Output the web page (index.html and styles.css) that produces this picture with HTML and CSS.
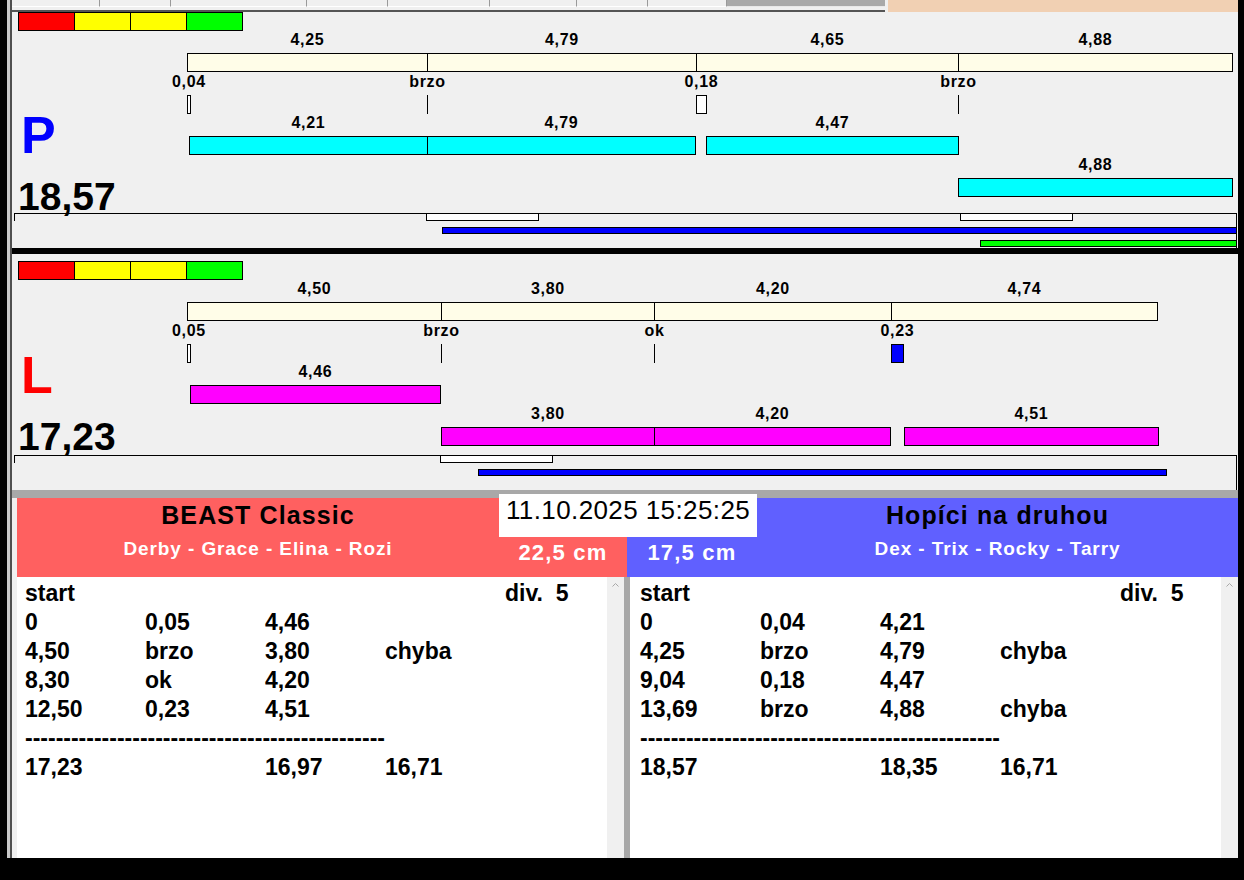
FILE: index.html
```html
<!DOCTYPE html>
<html lang="cs">
<head>
    <meta charset="UTF-8">
    <meta name="viewport" content="width=device-width, initial-scale=1.0">
    <link rel="stylesheet" href="styles.css">
    <title>agility časomíra</title>
</head>
<body>
<div class="app">
  <div class="shell">
    <div class="screen">

      <!-- tab strip, mostly scrolled out of view -->
      <div class="topbar">
        <div class="tabs">
          <div class="tab"></div>
          <div class="tab"></div>
          <div class="tab"></div>
          <div class="tab"></div>
          <div class="tab"></div>
          <div class="tab"></div>
          <div class="tab"></div>
          <div class="tab"></div>
          <div class="tab-rest"></div>
        </div>
        <div class="peach"></div>
      </div>

      <!-- right lane -->
      <section class="lane lane-p">
        <div class="lane-head">
          <div class="rating"><span class="r"></span><span class="y"></span><span class="y"></span><span class="g"></span></div>
          <div class="letter">P</div>
          <div class="total">18,57</div>
        </div>
        <div class="track">
          <i class="tick"></i>
          <i class="gap" style="left:412px"></i>
          <i class="gap" style="left:946px"></i>
          <i class="bar-blue" style="left:428px;width:795px"></i>
          <i class="bar-green" style="left:966px;width:257px"></i>
        </div>
        <div class="chart">
          <div class="seg plan" style="left:175px;width:241px"><span>4,25</span></div>
          <div class="seg plan" style="left:415px;width:270px"><span>4,79</span></div>
          <div class="seg plan" style="left:684px;width:263px"><span>4,65</span></div>
          <div class="seg plan" style="left:946px;width:275px"><span>4,88</span></div>

          <div class="mark" style="left:175px;width:4px"><span>0,04</span></div>
          <div class="mark line" style="left:415px"><span>brzo</span></div>
          <div class="mark" style="left:684px;width:11px"><span>0,18</span></div>
          <div class="mark line" style="left:946px"><span>brzo</span></div>

          <div class="seg run" style="left:177px;width:239px"><span>4,21</span></div>
          <div class="seg run" style="left:415px;width:269px"><span>4,79</span></div>
          <div class="seg run" style="left:694px;width:253px"><span>4,47</span></div>
          <div class="seg run second" style="left:946px;width:275px"><span>4,88</span></div>
        </div>
      </section>

      <div class="divider"></div>

      <!-- left lane -->
      <section class="lane lane-l">
        <div class="lane-head">
          <div class="rating"><span class="r"></span><span class="y"></span><span class="y"></span><span class="g"></span></div>
          <div class="letter">L</div>
          <div class="total">17,23</div>
        </div>
        <div class="track">
          <i class="tick"></i>
          <i class="gap" style="left:426px"></i>
          <i class="bar-blue" style="left:464px;width:689px"></i>
        </div>
        <div class="chart">
          <div class="seg plan" style="left:175px;width:255px"><span>4,50</span></div>
          <div class="seg plan" style="left:429px;width:214px"><span>3,80</span></div>
          <div class="seg plan" style="left:642px;width:238px"><span>4,20</span></div>
          <div class="seg plan" style="left:879px;width:267px"><span>4,74</span></div>

          <div class="mark" style="left:175px;width:4px"><span>0,05</span></div>
          <div class="mark line" style="left:429px"><span>brzo</span></div>
          <div class="mark line" style="left:642px"><span>ok</span></div>
          <div class="mark late" style="left:879px;width:13px"><span>0,23</span></div>

          <div class="seg run" style="left:178px;width:251px"><span>4,46</span></div>
          <div class="seg run second" style="left:429px;width:214px"><span>3,80</span></div>
          <div class="seg run second" style="left:642px;width:237px"><span>4,20</span></div>
          <div class="seg run second" style="left:892px;width:255px"><span>4,51</span></div>
        </div>
      </section>

      <!-- teams and protocols -->
      <div class="bottom">
        <div class="band"></div>
        <div class="heads">
          <div class="team team-red">
            <div class="names">
              <div class="title">BEAST Classic</div>
              <div class="dogs">Derby - Grace - Elina - Rozi</div>
            </div>
            <div class="height">22,5 cm</div>
          </div>
          <div class="team team-blue">
            <div class="height">17,5 cm</div>
            <div class="names">
              <div class="title">Hopíci na druhou</div>
              <div class="dogs">Dex - Trix - Rocky - Tarry</div>
            </div>
          </div>
        </div>
        <div class="clock">11.10.2025 15:25:25</div>

        <div class="lists">
          <div class="list list-left">
            <div class="body">
              <div class="row"><span>start</span><span></span><span></span><span></span><span>div.  5</span></div>
              <div class="row"><span>0</span><span>0,05</span><span>4,46</span></div>
              <div class="row"><span>4,50</span><span>brzo</span><span>3,80</span><span>chyba</span></div>
              <div class="row"><span>8,30</span><span>ok</span><span>4,20</span></div>
              <div class="row"><span>12,50</span><span>0,23</span><span>4,51</span></div>
              <div class="row"><span class="dash">-----------------------------------------------</span></div>
              <div class="row"><span>17,23</span><span></span><span>16,97</span><span>16,71</span></div>
            </div>
            <div class="scroll">
              <svg width="7" height="4" viewBox="0 0 7 4"><path d="M0.5 3.5 L3.5 0.5 L6.5 3.5" fill="none" stroke="#a8a8a8"/></svg>
            </div>
          </div>
          <div class="split"></div>
          <div class="list list-right">
            <div class="body">
              <div class="row"><span>start</span><span></span><span></span><span></span><span>div.  5</span></div>
              <div class="row"><span>0</span><span>0,04</span><span>4,21</span></div>
              <div class="row"><span>4,25</span><span>brzo</span><span>4,79</span><span>chyba</span></div>
              <div class="row"><span>9,04</span><span>0,18</span><span>4,47</span></div>
              <div class="row"><span>13,69</span><span>brzo</span><span>4,88</span><span>chyba</span></div>
              <div class="row"><span class="dash">-----------------------------------------------</span></div>
              <div class="row"><span>18,57</span><span></span><span>18,35</span><span>16,71</span></div>
            </div>
            <div class="scroll">
              <svg width="7" height="4" viewBox="0 0 7 4"><path d="M0.5 3.5 L3.5 0.5 L6.5 3.5" fill="none" stroke="#a8a8a8"/></svg>
            </div>
          </div>
        </div>
      </div>

    </div>
  </div>
</div>
</body>
</html>
```

FILE: styles.css
```css
/* Basic reset */
* {
    margin: 0;
    padding: 0;
    box-sizing: border-box;
}
body {
    background: #000;
    font-family: "Liberation Sans", Arial, sans-serif;
    color: #000;
}
.app {
    width: 1244px;
    height: 880px;
    display: flex;
    padding: 0 6px 22px 7px;
    background: #000;
}
.shell {
    flex: 1;
    display: flex;
    border-left: 3px solid #c8c8c8;
}
.screen {
    flex: 1;
    display: flex;
    flex-direction: column;
    border-left: 2px solid #505050;
    background: #f0f0f0;
    overflow: hidden;
}

/* tab strip */
.topbar {
    display: flex;
    height: 12px;
    flex-shrink: 0;
    gap: 3px;
}
.tabs {
    display: flex;
    width: 873px;
    height: 12px;
    border-bottom: 2px solid #555;
}
.tab {
    height: 7px;
    background: #f0f0f0;
    border-right: 1px solid #9a9a9a;
    border-bottom: 1px solid #fff;
}
.tab:nth-child(1) { width: 88px; }
.tab:nth-child(2) { width: 71px; }
.tab:nth-child(3) { width: 136px; }
.tab:nth-child(4) { width: 81px; }
.tab:nth-child(5) { width: 102px; }
.tab:nth-child(6) { width: 87px; }
.tab:nth-child(7) { width: 71px; }
.tab:nth-child(8) { width: 79px; }
.tab-rest {
    flex: 1;
    height: 7px;
    background: #a9a9a9;
    border-bottom: 1px solid #e8e8e8;
}
.peach {
    width: 350px;
    background: #f1d0b3;
}

/* lanes */
.lane {
    position: relative;
    height: 236px;
    flex-shrink: 0;
    display: flex;
    flex-direction: column;
}
.lane-head {
    height: 201px;
    flex-shrink: 0;
}
.rating {
    display: flex;
    width: max-content;
    height: 19px;
    margin-left: 6px;
    border: 1px solid #000;
    border-right: 0;
}
.rating span {
    width: 56px;
    border-right: 1px solid #000;
}
.rating .r { background: #ff0000; }
.rating .y { background: #ffff00; }
.rating .g { background: #00ff00; }
.lane-l .rating {
    margin-top: 7px;
}
.letter {
    font-size: 52px;
    line-height: 52px;
    font-weight: bold;
    margin-left: 9px;
}
.lane-p .letter {
    color: #0000ff;
    margin-top: 78px;
}
.lane-l .letter {
    color: #ff0000;
    margin-top: 69px;
}
.total {
    font-size: 39px;
    line-height: 39px;
    font-weight: bold;
    margin-left: 6px;
    margin-top: 16px;
}

/* timing chart */
.chart {
    position: absolute;
    left: 0;
    right: 0;
    top: 0;
    height: 201px;
}
.lane-p .chart {
    top: -7px;
}
.seg, .mark {
    position: absolute;
    height: 19px;
    border: 1px solid #000;
}
.seg span, .mark span {
    position: absolute;
    left: -40px;
    right: -40px;
    top: -22px;
    text-align: center;
    font-size: 16px;
    line-height: 16px;
    font-weight: bold;
    letter-spacing: 0.7px;
    white-space: nowrap;
}
.seg.plan {
    top: 48px;
    background: #fffde8;
}
.seg.run {
    top: 131px;
}
.seg.run.second {
    top: 173px;
}
.lane-p .seg.run { background: #00ffff; }
.lane-l .seg.run { background: #ff00ff; }
.mark {
    top: 90px;
    background: #fff;
}
.mark.line {
    width: 1px;
    border: none;
    background: #000;
}
.mark.line span {
    top: -21px;
}
.mark.late {
    background: #0000ff;
}

/* track under the chart */
.track {
    position: relative;
    height: 35px;
    width: 1223px;
    margin-left: 2px;
    border-top: 1px solid #000;
    border-right: 1px solid #000;
}
.track i {
    position: absolute;
    border: 1px solid #000;
}
.track .tick {
    left: 0;
    top: -1px;
    width: 1px;
    height: 8px;
    border: none;
    background: #000;
}
.track .gap {
    top: -1px;
    width: 113px;
    height: 8px;
    background: #fff;
}
.track .bar-blue {
    top: 13px;
    height: 7px;
    background: #0000ff;
}
.track .bar-green {
    top: 26px;
    height: 7px;
    background: #00ff00;
}
.divider {
    height: 6px;
    flex-shrink: 0;
    background: #000;
}

/* teams */
.bottom {
    position: relative;
    flex: 1;
    display: flex;
    flex-direction: column;
}
.band {
    height: 8px;
    background: #a8a8a8;
}
.heads {
    display: flex;
    height: 79px;
    margin-left: 5px;
}
.team {
    display: flex;
}
.team-red {
    width: 610px;
    background: #ff6060;
}
.team-blue {
    width: 611px;
    background: #6060ff;
}
.names {
    padding-top: 2px;
    text-align: center;
    font-weight: bold;
}
.team-red .names { width: 482px; }
.team-blue .names { width: 481px; }
.title {
    font-size: 25px;
    line-height: 30px;
    letter-spacing: 1.1px;
}
.dogs {
    margin-top: 7px;
    font-size: 19px;
    line-height: 24px;
    letter-spacing: 0.9px;
    color: #fff;
}
.height {
    padding-top: 42px;
    text-align: center;
    font-size: 22px;
    line-height: 26px;
    font-weight: bold;
    letter-spacing: 1.2px;
    color: #fff;
}
.team-red .height { width: 128px; }
.team-blue .height { width: 130px; }
.clock {
    position: absolute;
    top: 4px;
    left: 487px;
    width: 258px;
    height: 43px;
    padding-top: 1px;
    background: #fff;
    text-align: center;
    font-size: 26px;
    line-height: 30px;
    letter-spacing: 0.4px;
}

/* protocols */
.lists {
    flex: 1;
    display: flex;
    margin-left: 5px;
}
.list {
    display: flex;
}
.list-left { width: 607px; }
.list-right { width: 608px; }
.split {
    width: 6px;
    background: #a8a8a8;
}
.list .body {
    flex: 1;
    background: #fff;
    padding: 2px 0 0 8px;
}
.list-right .body {
    padding-left: 10px;
}
.scroll {
    width: 17px;
    background: #f0f0f0;
    display: flex;
    justify-content: center;
    align-items: flex-start;
    padding-top: 6px;
}
.scroll svg {
    display: block;
}
.row {
    display: grid;
    grid-template-columns: 120px 120px 120px 120px auto;
    height: 29px;
    font-size: 23px;
    line-height: 29px;
    font-weight: bold;
    white-space: pre;
}
.row .dash {
    grid-column: 1 / -1;
}
```
